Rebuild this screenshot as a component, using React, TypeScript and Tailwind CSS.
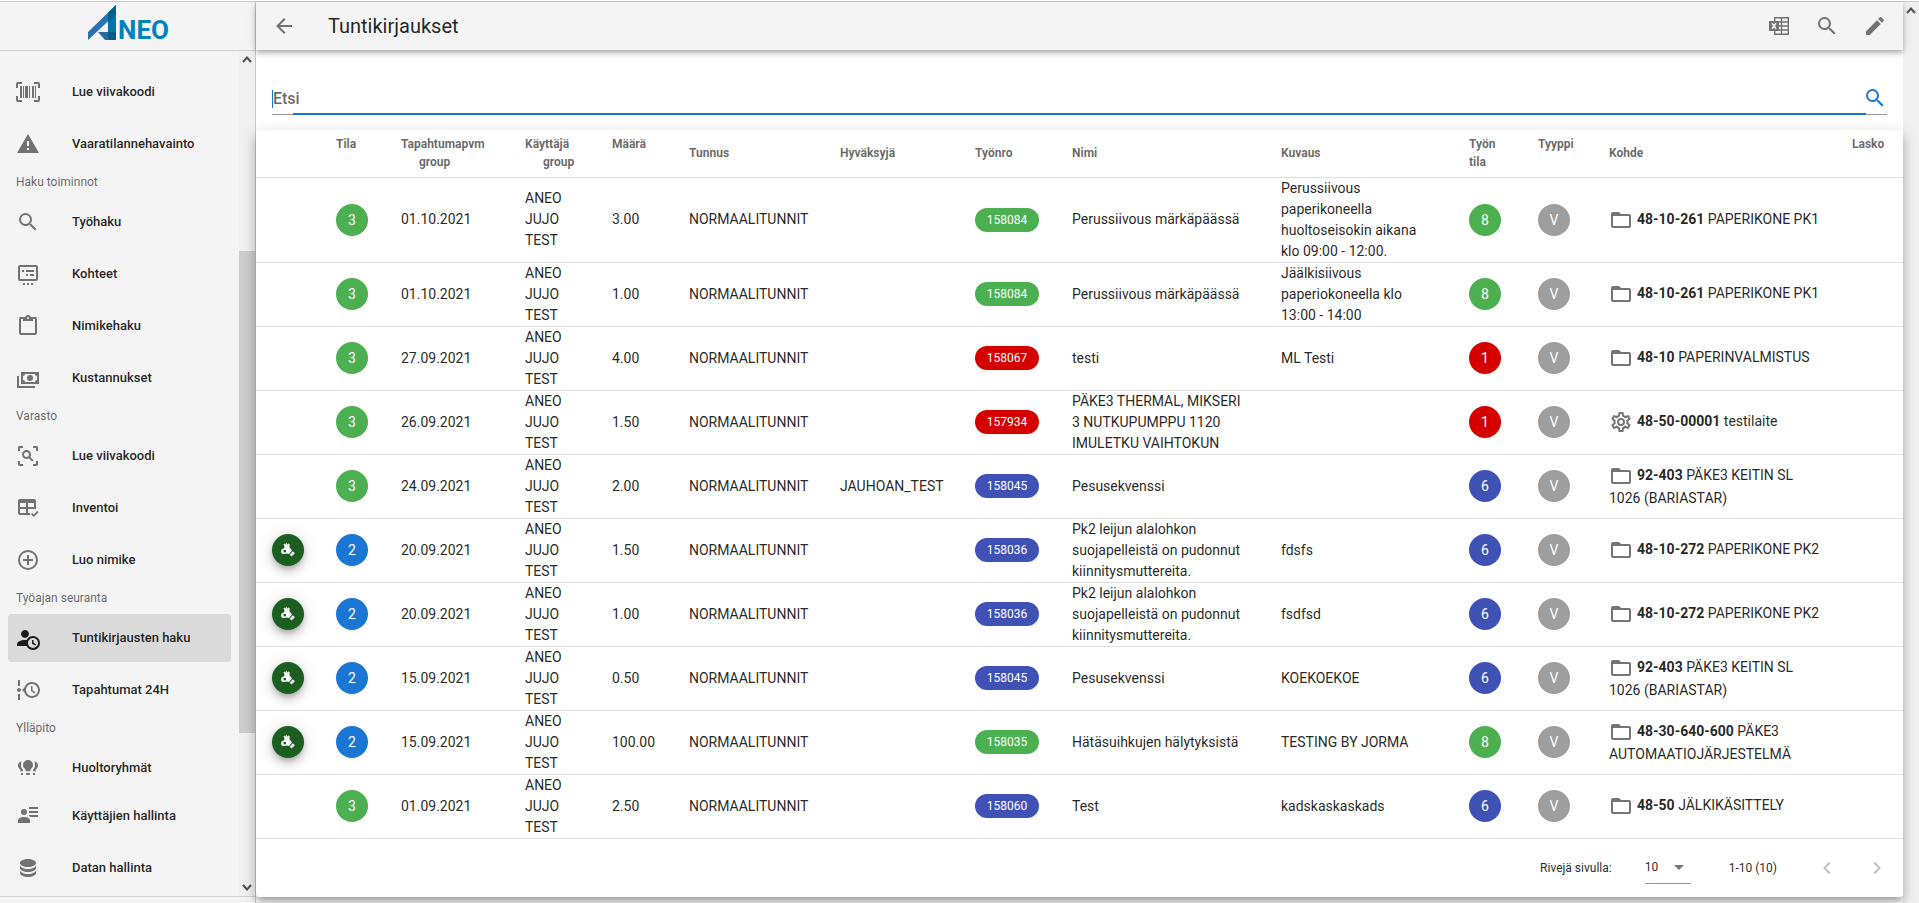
import type { ReactNode } from "react";

const paths = {
  barcode:
    "M4,6H6V18H4V6M7,6H8V18H7V6M9,6H12V18H9V6M13,6H14V18H13V6M16,6H18V18H16V6M19,6H20V18H19V6M2,4V8H0V4A2,2 0 0,1 2,2H6V4H2M22,2A2,2 0 0,1 24,4V8H22V4H18V2H22M2,16V20H6V22H2A2,2 0 0,1 0,20V16H2M22,20V16H24V20A2,2 0 0,1 22,22H18V20H22Z",
  alert: "M13 14H11V9H13M13 18H11V16H13M1 21H23L12 2L1 21Z",
  magnify:
    "M9.5,3A6.5,6.5 0 0,1 16,9.5C16,11.11 15.41,12.59 14.44,13.73L14.71,14H15.5L20.5,19L19,20.5L14,15.5V14.71L13.73,14.44C12.59,15.41 11.11,16 9.5,16A6.5,6.5 0 0,1 3,9.5A6.5,6.5 0 0,1 9.5,3M9.5,5C7,5 5,7 5,9.5C5,12 7,14 9.5,14C12,14 14,12 14,9.5C14,7 12,5 9.5,5Z",
  board:
    "M4,3H20A2,2 0 0,1 22,5V17A2,2 0 0,1 20,19H4A2,2 0 0,1 2,17V5A2,2 0 0,1 4,3M4,5V17H20V5H4M6,8H8V10H6V8M10,8H18V10H10V8M10,12H12V14H10V12M14,12H18V14H14V12M7,21H9V23H7V21M11,21H13V23H11V21M15,21H17V23H15V21Z",
  clipboard:
    "M19,3H14.82C14.4,1.84 13.3,1 12,1C10.7,1 9.6,1.84 9.18,3H5A2,2 0 0,0 3,5V19A2,2 0 0,0 5,21H19A2,2 0 0,0 21,19V5A2,2 0 0,0 19,3M12,3A1,1 0 0,1 13,4A1,1 0 0,1 12,5A1,1 0 0,1 11,4A1,1 0 0,1 12,3M7,7H17V5H19V19H5V5H7V7Z",
  cash: "M5,6H23V18H5V6M14,9A3,3 0 0,1 17,12A3,3 0 0,1 14,15A3,3 0 0,1 11,12A3,3 0 0,1 14,9M9,8A2,2 0 0,1 7,10V14A2,2 0 0,1 9,16H19A2,2 0 0,1 21,14V10A2,2 0 0,1 19,8H9M1,10H3V20H19V22H1V10Z",
  scan: "M17 22V20H20V17H22V20.5C22 20.89 21.84 21.24 21.54 21.54C21.24 21.84 20.89 22 20.5 22H17M7 22H3.5C3.11 22 2.76 21.84 2.46 21.54C2.16 21.24 2 20.89 2 20.5V17H4V20H7V22M17 2H20.5C20.89 2 21.24 2.16 21.54 2.46C21.84 2.76 22 3.11 22 3.5V7H20V4H17V2M7 2V4H4V7H2V3.5C2 3.11 2.16 2.76 2.46 2.46C2.76 2.16 3.11 2 3.5 2H7M10.5 6C13 6 15 8 15 10.5C15 11.38 14.75 12.2 14.31 12.9L17.57 16.16L16.16 17.57L12.9 14.31C12.2 14.75 11.38 15 10.5 15C8 15 6 13 6 10.5C6 8 8 6 10.5 6M10.5 8C9.12 8 8 9.12 8 10.5C8 11.88 9.12 13 10.5 13C11.88 13 13 11.88 13 10.5C13 9.12 11.88 8 10.5 8Z",
  tableCheck:
    "M4 3H18C19.11 3 20 3.9 20 5V13H12V17H14V19H4C2.9 19 2 18.11 2 17V5C2 3.9 2.9 3 4 3M4 7V11H10V7H4M12 7V11H18V7H12M4 13V17H10V13H4M17.75 21L15 18L16.16 16.84L17.75 18.43L21.34 14.84L22.5 16.25L17.75 21Z",
  plus: "M12,20C7.59,20 4,16.41 4,12C4,7.59 7.59,4 12,4C16.41,4 20,7.59 20,12C20,16.41 16.41,20 12,20M12,2A10,10 0 0,0 2,12A10,10 0 0,0 12,22A10,10 0 0,0 22,12A10,10 0 0,0 12,2M13,7H11V11H7V13H11V17H13V13H17V11H13V7Z",
  userClock:
    "M10.63,14.1C12.23,10.58 16.38,9.03 19.9,10.63C23.42,12.23 24.97,16.38 23.37,19.9C22.24,22.4 19.75,24 17,24C14.3,24 11.83,22.44 10.67,20H1V18C1.06,16.86 1.84,15.93 3.34,15.18C4.84,14.43 6.72,14.04 9,14C9.57,14 10.11,14.05 10.63,14.1V14.1M9,4C10.12,4.03 11.06,4.42 11.81,5.17C12.56,5.92 12.93,6.86 12.93,8C12.93,9.14 12.56,10.08 11.81,10.83C11.06,11.58 10.12,11.95 9,11.95C7.88,11.95 6.94,11.58 6.19,10.83C5.44,10.08 5.07,9.14 5.07,8C5.07,6.86 5.44,5.92 6.19,5.17C6.94,4.42 7.88,4.03 9,4M17,22A5,5 0 0,0 22,17A5,5 0 0,0 17,12A5,5 0 0,0 12,17A5,5 0 0,0 17,22M16,14H17.5V16.82L19.94,18.23L19.19,19.53L16,17.69V14Z",
  timeline:
    "M4 2V8H2V2H4M2 22V16H4V22H2M5 12C5 13.11 4.11 14 3 14C1.9 14 1 13.11 1 12C1 10.9 1.9 10 3 10C4.11 10 5 10.9 5 12M16 4C20.42 4 24 7.58 24 12C24 16.42 20.42 20 16 20C12.4 20 9.36 17.62 8.35 14.35L6 12L8.35 9.65C9.36 6.38 12.4 4 16 4M16 6C12.69 6 10 8.69 10 12C10 15.31 12.69 18 16 18C19.31 18 22 15.31 22 12C22 8.69 19.31 6 16 6M15 13L18.53 15.54L19.43 14.32L16.5 12.2V8H15V13Z",
  bulbs:
    "M12,4A5,5 0 0,1 17,9C17,10.9 16,12.4 14.5,13.3V14.5A.7,.7 0 0,1 13.8,15.2H10.2A.7,.7 0 0,1 9.5,14.5V13.3C8,12.4 7,10.9 7,9A5,5 0 0,1 12,4M10,17H14V18A1,1 0 0,1 13,19H11A1,1 0 0,1 10,18V17M5.6,5.2C3.4,5.7 2,7.4 2,9.5C2,11.2 2.9,12.7 4.2,13.5V15.2H7V13.7C5.6,12.5 5,10.9 5,9.2C5,7.7 5.2,6.4 5.6,5.2M5,17H7V19H5V17M18.4,5.2C20.6,5.7 22,7.4 22,9.5C22,11.2 21.1,12.7 19.8,13.5V15.2H17V13.7C18.4,12.5 19,10.9 19,9.2C19,7.7 18.8,6.4 18.4,5.2M17,17H19V19H17V17Z",
  details:
    "M13,3H22V5H13V3M13,7H22V9H13V7M13,11H22V13H14.5L13,12V11M8,5A3,3 0 0,1 11,8A3,3 0 0,1 8,11A3,3 0 0,1 5,8A3,3 0 0,1 8,5M2,19V16.5C2,14.5 4.7,13 8,13C11.3,13 14,14.5 14,16.5V19H2Z",
  database:
    "M12,3C7.58,3 4,4.79 4,7C4,9.21 7.58,11 12,11C16.42,11 20,9.21 20,7C20,4.79 16.42,3 12,3M4,9V12C4,14.21 7.58,16 12,16C16.42,16 20,14.21 20,12V9C20,11.21 16.42,13 12,13C7.58,13 4,11.21 4,9M4,14V17C4,19.21 7.58,21 12,21C16.42,21 20,19.21 20,17V14C20,16.21 16.42,18 12,18C7.58,18 4,16.21 4,14Z",
  folder:
    "M20,18H4V8H20M20,6H12L10,4H4C2.89,4 2,4.89 2,6V18A2,2 0 0,0 4,20H20A2,2 0 0,0 22,18V8C22,6.89 21.1,6 20,6Z",
  cog: "M12,8A4,4 0 0,1 16,12A4,4 0 0,1 12,16A4,4 0 0,1 8,12A4,4 0 0,1 12,8M12,10A2,2 0 0,0 10,12A2,2 0 0,0 12,14A2,2 0 0,0 14,12A2,2 0 0,0 12,10M10,22C9.75,22 9.54,21.82 9.5,21.58L9.13,18.93C8.5,18.68 7.96,18.34 7.44,17.94L4.95,18.95C4.73,19.03 4.46,18.95 4.34,18.73L2.34,15.27C2.21,15.05 2.27,14.78 2.46,14.63L4.57,12.97L4.5,12L4.57,11L2.46,9.37C2.27,9.22 2.21,8.95 2.34,8.73L4.34,5.27C4.46,5.05 4.73,4.96 4.95,5.05L7.44,6.05C7.96,5.66 8.5,5.32 9.13,5.07L9.5,2.42C9.54,2.18 9.75,2 10,2H14C14.25,2 14.46,2.18 14.5,2.42L14.87,5.07C15.5,5.32 16.04,5.66 16.56,6.05L19.05,5.05C19.27,4.96 19.54,5.05 19.66,5.27L21.66,8.73C21.79,8.95 21.73,9.22 21.54,9.37L19.43,11L19.5,12L19.43,13L21.54,14.63C21.73,14.78 21.79,15.05 21.66,15.27L19.66,18.73C19.54,18.95 19.27,19.04 19.05,18.95L16.56,17.95C16.04,18.34 15.5,18.68 14.87,18.93L14.5,21.58C14.46,21.82 14.25,22 14,22H10M11.25,4L10.88,6.61C9.68,6.86 8.62,7.5 7.85,8.39L5.44,7.35L4.69,8.65L6.8,10.2C6.4,11.37 6.4,12.64 6.8,13.8L4.68,15.36L5.43,16.66L7.86,15.62C8.63,16.5 9.68,17.14 10.87,17.38L11.24,20H12.76L13.13,17.39C14.32,17.14 15.37,16.5 16.14,15.62L18.57,16.66L19.32,15.36L17.2,13.81C17.6,12.64 17.6,11.37 17.2,10.2L19.31,8.65L18.56,7.35L16.15,8.39C15.38,7.5 14.32,6.86 13.12,6.62L12.75,4H11.25Z",
  pencil:
    "M20.71,7.04C21.1,6.65 21.1,6 20.71,5.63L18.37,3.29C18,2.9 17.35,2.9 16.96,3.29L15.12,5.12L18.87,8.87M3,17.25V21H6.75L17.81,9.93L14.06,6.18L3,17.25Z",
  back: "M20,11V13H8L13.5,18.5L12.08,19.92L4.16,12L12.08,4.08L13.5,5.5L8,11H20Z",
  prev: "M15.41,16.58L10.83,12L15.41,7.41L14,6L8,12L14,18L15.41,16.58Z",
  next: "M8.59,16.58L13.17,12L8.59,7.41L10,6L16,12L10,18L8.59,16.58Z",
  caret: "M7,10L12,15L17,10H7Z",
};

type IconName = keyof typeof paths;

function Icon({ name, className = "" }: { name: IconName; className?: string }) {
  return (
    <svg viewBox="0 0 24 24" className={`size-6 shrink-0 ${className}`} fill="currentColor" fillRule="evenodd" aria-hidden="true">
      <path d={paths[name]} />
    </svg>
  );
}

function ExcelIcon() {
  return (
    <svg viewBox="0 0 24 24" className="size-6" fill="none" stroke="currentColor" aria-hidden="true">
      <path d="M7.7 8V3.7H21.3V20.3H7.7V16M14.5 3.7V20.3M11 8H21.3M12 12H21.3M11 16H21.3" strokeWidth="1.4" />
      <path d="M2 7H12V17H2Z" fill="currentColor" stroke="none" />
      <path d="M5 9.2L9 14.8M9 9.2L5 14.8" stroke="#f4f4f4" strokeWidth="1.5" />
    </svg>
  );
}

function OkHandIcon() {
  return (
    <svg viewBox="0 0 16 16" className="size-4" fill="#fff" aria-hidden="true">
      <path
        fillRule="evenodd"
        d="M3.6 2.2L4.6 1.4L5.5 3L5.8 .8L7 .7L7.5 2.8L8.4 1.4L9.5 1.9L9.5 5.2L12 8.6L8.9 11.9L7.4 11.4L4 12L1.6 11.5L1 9.6L1.6 7.6L4 6.4L4.6 5ZM4.8 7.8A1.4 1.4 0 1 0 4.8 10.6A1.4 1.4 0 1 0 4.8 7.8Z"
      />
      <path d="M12.9 9.3L14.8 11.3L11.5 14.5L9.7 12.6Z" />
    </svg>
  );
}

function Logo() {
  return (
    <a href="#etusivu" aria-label="Aneo" className="flex h-9 items-end gap-0.5 pl-0.5 font-bold text-[#0082bd]">
      <svg viewBox="0 0 28 36" className="h-9 w-7" aria-hidden="true">
        <path d="M0 27L28 0V9L0 35Z" fill="#2872b0" />
        <path d="M10 27H21V35H17Z" fill="#2a6aa5" />
        <path d="M20 8L28 0V35H20Z" fill="#0075a8" />
        <path d="M20 8L28 0V10L20 17Z" fill="#00648c" />
        <path d="M20 27H28V35H22L20 33Z" fill="#005f87" />
      </svg>
      <span className="text-[26px] leading-[22px]">NEO</span>
    </a>
  );
}

type NavEntry = { icon: IconName; label: string; active?: boolean; tight?: boolean };
const navGroups: { title?: string; items: NavEntry[] }[] = [
  {
    items: [
      { icon: "barcode", label: "Lue viivakoodi" },
      { icon: "alert", label: "Vaaratilannehavainto" },
    ],
  },
  {
    title: "Haku toiminnot",
    items: [
      { icon: "magnify", label: "Työhaku" },
      { icon: "board", label: "Kohteet" },
      { icon: "clipboard", label: "Nimikehaku" },
      { icon: "cash", label: "Kustannukset" },
    ],
  },
  {
    title: "Varasto",
    items: [
      { icon: "scan", label: "Lue viivakoodi" },
      { icon: "tableCheck", label: "Inventoi" },
      { icon: "plus", label: "Luo nimike" },
    ],
  },
  {
    title: "Työajan seuranta",
    items: [
      { icon: "userClock", label: "Tuntikirjausten haku", active: true },
      { icon: "timeline", label: "Tapahtumat 24H" },
    ],
  },
  {
    title: "Ylläpito",
    items: [
      { icon: "bulbs", label: "Huoltoryhmät", tight: true },
      { icon: "details", label: "Käyttäjien hallinta" },
      { icon: "database", label: "Datan hallinta" },
    ],
  },
];

function ScrollArrow({ down = false }: { down?: boolean }) {
  return (
    <svg viewBox="0 0 16 17" className="h-[17px] w-4 shrink-0" fill="none" stroke="#505050" strokeWidth="2" aria-hidden="true">
      <path d={down ? "M4 6L8 10.5L12 6" : "M4 11L8 6.5L12 11"} />
    </svg>
  );
}

function Sidebar() {
  return (
    <aside className="flex w-64 shrink-0 flex-col border-r border-[#c8c8c8] bg-[#f4f4f4]">
      <div className="flex h-[49px] shrink-0 items-start justify-center border-b border-[#d0d0d0] pt-[3px]">
        <Logo />
      </div>
      <div className="flex min-h-0 flex-1">
        <nav className="min-w-0 flex-1 overflow-hidden px-2 pt-[17px]" aria-label="Päävalikko">
          {navGroups.map((group, i) => (
            <section key={i}>
              {group.title && (
                <h2 className="h-[26px] px-2 text-xs leading-5 text-black/60">{group.title}</h2>
              )}
              {group.items.map((item) => (
                <a
                  key={item.label}
                  href="#valikko"
                  aria-current={item.active ? "page" : undefined}
                  className={`flex h-12 items-center gap-8 rounded px-2 text-[13px] font-medium text-black/87 ${
                    item.active ? "bg-[#dadada]" : ""
                  } ${item.tight ? "" : "mb-1"}`}
                >
                  <Icon name={item.icon} className={item.active ? "" : "text-[#727272]"} />
                  {item.label}
                </a>
              ))}
            </section>
          ))}
        </nav>
        <div className="flex w-4 shrink-0 flex-col bg-[#f0f0f0]">
          <ScrollArrow />
          <div className="grow-[183] basis-0" />
          <div className="grow-[482] basis-0 bg-[#cdcdcd]" />
          <div className="grow-[146] basis-0" />
          <ScrollArrow down />
        </div>
      </div>
      <div className="h-[7px] shrink-0 border-t border-[#d0d0d0]" />
    </aside>
  );
}

const chipColors = {
  green: "bg-[#4caf50]",
  red: "bg-[#d50000]",
  indigo: "bg-[#3f51b5]",
  blue: "bg-[#1976d2]",
  gray: "bg-[#9e9e9e]",
};
type Color = keyof typeof chipColors;

function Circle({ color, children }: { color: Color; children: ReactNode }) {
  return (
    <span className={`flex size-8 items-center justify-center rounded-full text-sm text-white ${chipColors[color]}`}>
      {children}
    </span>
  );
}

type Row = {
  approve?: boolean;
  state: number;
  date: string;
  amount: string;
  approver?: string;
  work: string;
  color: Color;
  name: string;
  desc?: string;
  workState: number;
  code: string;
  target: string;
  gear?: boolean;
};

const rows: Row[] = [
  { state: 3, date: "01.10.2021", amount: "3.00", work: "158084", color: "green", name: "Perussiivous märkäpäässä", desc: "Perussiivous paperikoneella huoltoseisokin aikana klo 09:00 - 12:00.", workState: 8, code: "48-10-261", target: "PAPERIKONE PK1" },
  { state: 3, date: "01.10.2021", amount: "1.00", work: "158084", color: "green", name: "Perussiivous märkäpäässä", desc: "Jäälkisiivous paperiokoneella klo 13:00 - 14:00", workState: 8, code: "48-10-261", target: "PAPERIKONE PK1" },
  { state: 3, date: "27.09.2021", amount: "4.00", work: "158067", color: "red", name: "testi", desc: "ML Testi", workState: 1, code: "48-10", target: "PAPERINVALMISTUS" },
  { state: 3, date: "26.09.2021", amount: "1.50", work: "157934", color: "red", name: "PÄKE3 THERMAL, MIKSERI 3 NUTKUPUMPPU 1120 IMULETKU VAIHTOKUN", workState: 1, code: "48-50-00001", target: "testilaite", gear: true },
  { state: 3, date: "24.09.2021", amount: "2.00", approver: "JAUHOAN_TEST", work: "158045", color: "indigo", name: "Pesusekvenssi", workState: 6, code: "92-403", target: "PÄKE3 KEITIN SL 1026 (BARIASTAR)" },
  { approve: true, state: 2, date: "20.09.2021", amount: "1.50", work: "158036", color: "indigo", name: "Pk2 leijun alalohkon suojapelleistä on pudonnut kiinnitysmuttereita.", desc: "fdsfs", workState: 6, code: "48-10-272", target: "PAPERIKONE PK2" },
  { approve: true, state: 2, date: "20.09.2021", amount: "1.00", work: "158036", color: "indigo", name: "Pk2 leijun alalohkon suojapelleistä on pudonnut kiinnitysmuttereita.", desc: "fsdfsd", workState: 6, code: "48-10-272", target: "PAPERIKONE PK2" },
  { approve: true, state: 2, date: "15.09.2021", amount: "0.50", work: "158045", color: "indigo", name: "Pesusekvenssi", desc: "KOEKOEKOE", workState: 6, code: "92-403", target: "PÄKE3 KEITIN SL 1026 (BARIASTAR)" },
  { approve: true, state: 2, date: "15.09.2021", amount: "100.00", work: "158035", color: "green", name: "Hätäsuihkujen hälytyksistä", desc: "TESTING BY JORMA", workState: 8, code: "48-30-640-600", target: "PÄKE3 AUTOMAATIOJÄRJESTELMÄ" },
  { state: 3, date: "01.09.2021", amount: "2.50", work: "158060", color: "indigo", name: "Test", desc: "kadskaskaskads", workState: 6, code: "48-50", target: "JÄLKIKÄSITTELY" },
];

type Column = { label: string; width: string; second?: string; sub?: string; top?: boolean };
const columns: Column[] = [
  { label: "", width: "w-[64px]" },
  { label: "Tila", width: "w-[65px]", top: true },
  { label: "Tapahtumapvm", width: "w-[124px]", sub: "group" },
  { label: "Käyttäjä", width: "w-[87px]", sub: "group" },
  { label: "Määrä", width: "w-[77px]", top: true },
  { label: "Tunnus", width: "w-[151px]" },
  { label: "Hyväksyjä", width: "w-[135px]" },
  { label: "Työnro", width: "w-[97px]" },
  { label: "Nimi", width: "w-[209px]" },
  { label: "Kuvaus", width: "w-[188px]" },
  { label: "Työn", width: "w-[69px]", second: "tila" },
  { label: "Tyyppi", width: "w-[71px]", top: true },
  { label: "Kohde", width: "w-[243px]" },
  { label: "Lasko", width: "w-[67px]", top: true },
];

const stateColor = (s: number): Color => (s === 3 ? "green" : "blue");
const workColor = (s: number): Color => (s === 8 ? "green" : s === 1 ? "red" : "indigo");

function HoursTable() {
  return (
    <table className="w-full table-fixed border-collapse text-left text-sm leading-[21px]">
      <thead>
        <tr className="h-[47px] border-b border-black/12 text-xs leading-[18px] text-black/60">
          {columns.map((c, i) => (
            <th key={i} scope="col" className={`${c.width} whitespace-nowrap px-4 py-0 font-bold ${c.top ? "pt-[5px] align-top" : "align-middle"}`}>
              {c.label}
              {c.second && <span className="block">{c.second}</span>}
              {c.sub && <span className="block pl-[18px]">{c.sub}</span>}
            </th>
          ))}
        </tr>
      </thead>
      <tbody>
        {rows.map((r, i) => (
          <tr key={i} className="border-b border-black/12 [&>td]:px-4 [&>td]:py-0">
            <td>
              {r.approve && (
                <button
                  type="button"
                  aria-label="Hyväksy"
                  className="flex size-8 items-center justify-center rounded-full bg-[#1b5e20] shadow-[0_3px_5px_-1px_rgba(0,0,0,0.2),0_6px_10px_0_rgba(0,0,0,0.14),0_1px_18px_0_rgba(0,0,0,0.12)]"
                >
                  <OkHandIcon />
                </button>
              )}
            </td>
            <td>
              <Circle color={stateColor(r.state)}>{r.state}</Circle>
            </td>
            <td>{r.date}</td>
            <td>ANEO JUJO TEST</td>
            <td>{r.amount}</td>
            <td>NORMAALITUNNIT</td>
            <td>{r.approver}</td>
            <td>
              <a href="#tyo" className={`flex h-6 w-16 items-center justify-center rounded-full text-xs text-white ${chipColors[r.color]}`}>
                {r.work}
              </a>
            </td>
            <td>{r.name}</td>
            <td>{r.desc}</td>
            <td>
              <Circle color={workColor(r.workState)}>{r.workState}</Circle>
            </td>
            <td>
              <Circle color="gray">V</Circle>
            </td>
            <td>
              <Icon name={r.gear ? "cog" : "folder"} className="mr-1 inline-block align-middle text-[#757575]" />
              <b>{r.code}</b> {r.target}
            </td>
            <td />
          </tr>
        ))}
      </tbody>
    </table>
  );
}

function Footer() {
  return (
    <div className="flex h-[58px] items-center justify-end pr-[14px] text-xs">
      <label htmlFor="rows-per-page">Rivejä sivulla:</label>
      <div className="relative ml-[33px] flex h-8 w-[46px] items-center border-b border-black/42">
        <select id="rows-per-page" defaultValue="10" className="w-full appearance-none bg-transparent outline-none">
          <option>10</option>
          <option>25</option>
          <option>50</option>
        </select>
        <Icon name="caret" className="pointer-events-none absolute right-0 text-black/54" />
      </div>
      <span className="ml-[38px]">1-10 (10)</span>
      <button type="button" aria-label="Edellinen sivu" className="ml-[38px] text-black/26">
        <Icon name="prev" />
      </button>
      <button type="button" aria-label="Seuraava sivu" className="ml-[26px] text-black/26">
        <Icon name="next" />
      </button>
    </div>
  );
}

export default function App() {
  return (
    <div className="flex h-screen overflow-hidden border-t border-white bg-white font-['Roboto',sans-serif] text-black/87">
      <div className="flex min-w-0 flex-1 border-t border-[#c8cac8]">
        <Sidebar />
        <main className="flex min-w-0 flex-1 flex-col">
          <header className="relative z-10 flex h-12 shrink-0 items-center bg-[#f4f4f4] px-4 text-[#727272] shadow-[0_2px_4px_-1px_rgba(0,0,0,0.2),0_4px_5px_0_rgba(0,0,0,0.14),0_1px_10px_0_rgba(0,0,0,0.12)]">
            <button type="button" aria-label="Takaisin">
              <Icon name="back" />
            </button>
            <h1 className="ml-8 flex-1 text-xl text-black/87">Tuntikirjaukset</h1>
            <div className="flex gap-6">
              <button type="button" aria-label="Vie Exceliin">
                <ExcelIcon />
              </button>
              <button type="button" aria-label="Haku">
                <Icon name="magnify" />
              </button>
              <button type="button" aria-label="Muokkaa">
                <Icon name="pencil" />
              </button>
            </div>
          </header>
          <div className="min-h-0 flex-1">
            <div className="px-4 pt-8 pb-[15px]">
              <div className="relative flex h-[33px] items-center border-b border-black/42">
                <input
                  type="text"
                  aria-label="Etsi"
                  placeholder="Etsi"
                  className="mt-0.5 h-[18px] min-w-0 flex-1 border-l border-[#1976d2] bg-transparent text-base font-medium outline-none placeholder:text-black/60"
                />
                <button type="button" aria-label="Etsi kirjauksia" className="text-[#1976d2]">
                  <Icon name="magnify" />
                </button>
                <div className="absolute inset-x-[21px] -bottom-px h-[2px] bg-[#1976d2]" />
              </div>
            </div>
            <div className="relative rounded bg-white shadow-[0_5px_5px_-3px_rgba(0,0,0,0.2),0_8px_10px_1px_rgba(0,0,0,0.14),0_3px_14px_2px_rgba(0,0,0,0.12)]">
              <HoursTable />
              <Footer />
            </div>
          </div>
        </main>
        <div className="w-4 shrink-0 bg-[#f0f0f0]">
          <ScrollArrow />
        </div>
      </div>
    </div>
  );
}
